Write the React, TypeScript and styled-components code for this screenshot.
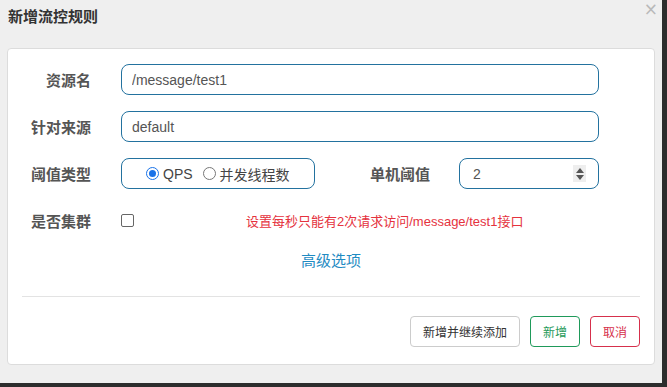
import styled, { createGlobalStyle } from 'styled-components';

const GlobalStyle = createGlobalStyle`
  html, body {
    margin: 0;
    padding: 0;
    background: #2d2d2d;
    font-family: "Liberation Sans", "Noto Sans CJK SC", sans-serif;
    overflow: hidden;
  }
`;

const Screen = styled.div`
  width: 667px;
  height: 387px;
  display: flex;
  align-items: flex-start;
`;

const ModalPanel = styled.div`
  width: 662px;
  height: 383px;
  background: #efefef;
  display: flex;
  flex-direction: column;
`;

const ModalHeader = styled.div`
  height: 48px;
  display: flex;
  justify-content: space-between;
  align-items: flex-start;
  padding: 0 4px 0 8px;
`;

const Title = styled.h4`
  margin: 7px 0 0;
  font-size: 15px;
  line-height: 20px;
  font-weight: bold;
  color: #333;
`;

const CloseButton = styled.span`
  margin-top: 1px;
  font-size: 17px;
  line-height: 17px;
  color: #b9b9b9;
  font-family: "DejaVu Sans", sans-serif;
`;

const Card = styled.div`
  margin-left: 7px;
  width: 646px;
  height: 315px;
  background: #fff;
  border: 1px solid #dcdcdc;
  border-radius: 4px;
  display: flex;
  flex-direction: column;
`;

const Form = styled.div`
  padding: 15px 55px 0 0;
  display: flex;
  flex-direction: column;
  gap: 16px;
`;

const Row = styled.div`
  display: flex;
  align-items: center;
  height: 31px;
`;

const Label = styled.label<{ width: number; gap?: number }>`
  width: ${p => p.width}px;
  flex: none;
  text-align: right;
  font-size: 15px;
  font-weight: bold;
  color: #555;
  margin-right: ${p => p.gap ?? 30}px;
`;

const TextInput = styled.input`
  flex: 1;
  height: 31px;
  box-sizing: border-box;
  border: 1px solid #23729f;
  border-radius: 8px;
  padding: 0 10px;
  font-family: inherit;
  font-size: 14px;
  color: #555;
  outline: none;
  background: #fff;
`;

const RadioBox = styled.div`
  width: 194px;
  height: 31px;
  box-sizing: border-box;
  border: 1px solid #23729f;
  border-radius: 8px;
  display: flex;
  align-items: center;
  padding-left: 24px;
  gap: 10px;
`;

const RadioOption = styled.label`
  display: flex;
  align-items: center;
  gap: 4px;
  font-size: 14px;
  color: #444;
`;

const RadioDot = styled.span<{ checked?: boolean }>`
  width: 11px;
  height: 11px;
  border-radius: 50%;
  border: 1px solid ${p => (p.checked ? '#1a73e8' : '#777')};
  box-sizing: content-box;
  display: inline-flex;
  align-items: center;
  justify-content: center;

  &::after {
    content: '';
    width: 7px;
    height: 7px;
    border-radius: 50%;
    background: ${p => (p.checked ? '#1a73e8' : 'transparent')};
  }
`;

const NumberBox = styled.div`
  width: 140px;
  height: 31px;
  box-sizing: border-box;
  border: 1px solid #23729f;
  border-radius: 8px;
  display: flex;
  align-items: center;
  padding: 0 12px 0 13px;
  font-size: 14px;
  color: #555;
`;

const NumberValue = styled.span`
  flex: 1;
`;

const Spinner = styled.span`
  width: 13px;
  height: 17px;
  background: #eee;
  display: flex;
  flex-direction: column;
  align-items: center;
  justify-content: center;
  gap: 2px;
`;

const Arrow = styled.span<{ down?: boolean }>`
  width: 0;
  height: 0;
  border-left: 4px solid transparent;
  border-right: 4px solid transparent;
  ${p => (p.down ? 'border-top: 5px solid #555;' : 'border-bottom: 5px solid #555;')}
`;

const Checkbox = styled.span`
  width: 11px;
  height: 11px;
  border: 1px solid #666;
  border-radius: 2px;
  flex: none;
`;

const Hint = styled.span`
  margin-left: 112px;
  font-size: 13px;
  color: #e5323e;
`;

const AdvancedLink = styled.a`
  display: block;
  margin-top: 15px;
  text-align: center;
  font-size: 15px;
  line-height: 20px;
  color: #1f8bc3;
  text-decoration: none;
`;

const Divider = styled.hr`
  margin: 25px 14px 0;
  border: none;
  border-top: 1px solid #e3e3e3;
`;

const Footer = styled.div`
  display: flex;
  justify-content: flex-end;
  gap: 10px;
  padding: 19px 14px 0;
`;

const Button = styled.button<{ tone: 'default' | 'success' | 'danger' }>`
  height: 31px;
  padding: 0 12px;
  border-radius: 4px;
  background: #fff;
  font-family: inherit;
  font-size: 12px;
  border: 1px solid
    ${p => (p.tone === 'success' ? '#1f9a5a' : p.tone === 'danger' ? '#d6304c' : '#ccc')};
  color: ${p => (p.tone === 'success' ? '#1f9a5a' : p.tone === 'danger' ? '#d6304c' : '#333')};
`;

const RightStrip = styled.div`
  flex: 1;
  align-self: stretch;
  background: #2d2d2d;
`;

export default function App() {
  return (
    <>
      <GlobalStyle />
      <Screen>
        <ModalPanel>
          <ModalHeader>
            <Title>新增流控规则</Title>
            <CloseButton>×</CloseButton>
          </ModalHeader>
          <Card>
            <Form>
              <Row>
                <Label width={83}>资源名</Label>
                <TextInput readOnly value="/message/test1" />
              </Row>
              <Row>
                <Label width={83}>针对来源</Label>
                <TextInput readOnly value="default" />
              </Row>
              <Row>
                <Label width={83}>阈值类型</Label>
                <RadioBox>
                  <RadioOption>
                    <RadioDot checked />
                    QPS
                  </RadioOption>
                  <RadioOption>
                    <RadioDot />
                    并发线程数
                  </RadioOption>
                </RadioBox>
                <Label width={115} gap={29}>单机阈值</Label>
                <NumberBox>
                  <NumberValue>2</NumberValue>
                  <Spinner>
                    <Arrow />
                    <Arrow down />
                  </Spinner>
                </NumberBox>
              </Row>
              <Row>
                <Label width={83}>是否集群</Label>
                <Checkbox />
                <Hint>设置每秒只能有2次请求访问/message/test1接口</Hint>
              </Row>
            </Form>
            <AdvancedLink>高级选项</AdvancedLink>
            <Divider />
            <Footer>
              <Button tone="default">新增并继续添加</Button>
              <Button tone="success">新增</Button>
              <Button tone="danger">取消</Button>
            </Footer>
          </Card>
        </ModalPanel>
        <RightStrip />
      </Screen>
    </>
  );
}
